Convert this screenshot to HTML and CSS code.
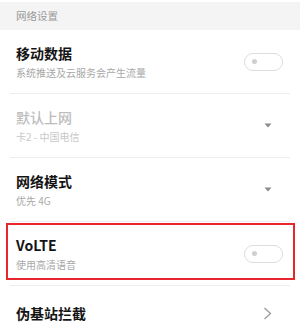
FILE: index.html
```html
<!DOCTYPE html>
<html lang="zh">
<head>
<meta charset="utf-8">
<link rel="stylesheet" href="styles.css">
</head>
<body>
<div class="section-header">网络设置</div>
<div class="list">
  <div class="row">
    <div class="text">
      <div class="title">移动数据</div>
      <div class="sub">系统推送及云服务会产生流量</div>
    </div>
    <div class="toggle"><span class="dot"></span></div>
  </div>
  <div class="row disabled">
    <div class="text">
      <div class="title">默认上网</div>
      <div class="sub">卡2 - 中国电信</div>
    </div>
    <svg class="caret" width="8" height="5" viewBox="0 0 8 5"><path d="M0.5 0.5 H7.5 L4 4.5 Z" fill="#8a8a8a"/></svg>
  </div>
  <div class="row">
    <div class="text">
      <div class="title">网络模式</div>
      <div class="sub">优先 4G</div>
    </div>
    <svg class="caret" width="8" height="5" viewBox="0 0 8 5"><path d="M0.5 0.5 H7.5 L4 4.5 Z" fill="#8a8a8a"/></svg>
  </div>
  <div class="row highlighted">
    <div class="text">
      <div class="title latin">VoLTE</div>
      <div class="sub">使用高清语音</div>
    </div>
    <div class="toggle"><span class="dot"></span></div>
    <div class="mark"></div>
  </div>
  <div class="row last">
    <div class="text">
      <div class="title">伪基站拦截</div>
    </div>
    <svg class="chevron" width="9" height="13" viewBox="0 0 9 13"><path d="M1.5 1 L7.5 6.5 L1.5 12" fill="none" stroke="#9a9a9a" stroke-width="1.3"/></svg>
  </div>
</div>
</body>
</html>
```

FILE: styles.css
```css
html, body {
  margin: 0;
  padding: 0;
  background: #ffffff;
  font-family: "Noto Sans CJK SC", "Noto Sans", sans-serif;
}

.section-header {
  margin-top: 2px;
  height: 28px;
  line-height: 28px;
  padding-left: 16px;
  background: #f4f4f4;
  color: #9a9a9a;
  font-size: 10.5px;
}

.row {
  margin: 0 10px;
  padding: 0 6px;
  height: 63px;
  border-bottom: 1px solid #eeeeee;
  display: flex;
  align-items: center;
  justify-content: space-between;
  position: relative;
}

.text {
  display: flex;
  flex-direction: column;
  gap: 2px;
}

.title {
  font-size: 14px;
  font-weight: 700;
  line-height: 20px;
  color: #141414;
}

.sub {
  font-size: 10px;
  line-height: 16px;
  color: #a8a8a8;
}

.disabled .title {
  color: #bdbdbd;
  font-weight: 500;
}

.disabled .sub {
  color: #c8c8c8;
}

.toggle {
  width: 37px;
  height: 16px;
  border: 1.5px solid #dedede;
  border-radius: 10px;
  margin-right: 1px;
  display: flex;
  align-items: center;
  padding-left: 7px;
  box-sizing: content-box;
  width: 30px;
}

.dot {
  width: 5px;
  height: 5px;
  border-radius: 50%;
  background: #cfcfcf;
}

.caret {
  margin-right: 12px;
}

.chevron {
  margin-right: 12px;
}

.mark {
  position: absolute;
  left: -4px;
  right: -5px;
  top: 1px;
  bottom: 5px;
  border: 2px solid #e8262e;
  pointer-events: none;
}

.last {
  height: 54px;
  border-bottom: none;
}
```
